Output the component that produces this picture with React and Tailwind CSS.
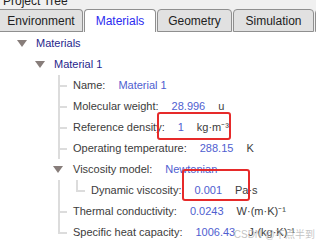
import React from 'react'

const LINE = 'border-[#dcdcdc]'

function Tri() {
  return (
    <svg width="10" height="7" viewBox="0 0 10 7">
      <polygon points="0,0 10,0 5,7" fill="#877d7a" />
    </svg>
  )
}

function Elbow({ last }) {
  return (
    <div className="w-[20px] self-stretch flex flex-col shrink-0">
      <div className={`ml-[5px] w-[9px] flex-1 border-l-2 border-b-2 ${LINE}`} />
      {last ? (
        <div className="flex-1" />
      ) : (
        <div className={`ml-[5px] flex-1 border-l-2 ${LINE}`} />
      )}
    </div>
  )
}

function Pass() {
  return (
    <div className="w-[18px] self-stretch shrink-0">
      <div className={`ml-[5px] h-full border-l-2 ${LINE}`} />
    </div>
  )
}

function Prop({ label, value, unit }) {
  return (
    <div className="flex items-center gap-[13px]">
      <span className="text-[#3c3c3c]">{label}</span>
      <span className="text-[#4f5ed0]">{value}</span>
      {unit && <span className="text-[#3c3c3c]">{unit}</span>}
    </div>
  )
}

const tabs = ['Environment', 'Materials', 'Geometry', 'Simulation']

export default function App() {
  return (
    <div className="relative w-[316px] h-[247px] overflow-hidden bg-[#f0f0f0] font-['Liberation_Sans',Arial,sans-serif]">
      <div className="h-[9px] overflow-hidden">
        <div className="pl-[3px] -mt-[6px] text-[12px] leading-[14px] text-[#222]">Project Tree</div>
      </div>

      <div className="flex items-end h-[23px] gap-px">
        {tabs.map((t) =>
          t === 'Materials' ? (
            <div
              key={t}
              className="h-[23px] w-[72px] shrink-0 flex items-center justify-center bg-white border border-b-0 border-[#8f8f8f] rounded-t-[4px] text-[12px] text-[#2b2bf0]"
            >
              {t}
            </div>
          ) : (
            <div
              key={t}
              className={`h-[23px] shrink-0 flex items-center justify-center bg-[#e1e1e1] border border-[#8f8f8f] rounded-t-[4px] text-[12px] text-[#222] ${
                t === 'Environment' ? 'w-[83px] border-l-0 rounded-tl-none' : t === 'Geometry' ? 'w-[75px]' : 'w-[81px]'
              }`}
            >
              {t}
            </div>
          )
        )}
        <div className="h-[23px] w-[10px] shrink-0 bg-[#e1e1e1] border border-[#8f8f8f] rounded-t-[4px]" />
      </div>

      <div className="bg-white h-[215px] pt-px text-[11px]">
        <div className="flex items-center h-[21px] pl-[17px]">
          <div className="w-[19px] shrink-0 flex"><Tri /></div>
          <span className="text-[#1f1f8c]">Materials</span>
        </div>
        <div className="flex items-center h-[21px] pl-[35px]">
          <div className="w-[19px] shrink-0 flex"><Tri /></div>
          <span className="text-[#1f1f8c]">Material 1</span>
        </div>

        <div className="flex items-center h-[21px] pl-[53px]">
          <Elbow />
          <Prop label="Name:" value="Material 1" />
        </div>
        <div className="flex items-center h-[21px] pl-[53px]">
          <Elbow />
          <Prop label="Molecular weight:" value="28.996" unit="u" />
        </div>
        <div className="flex items-center h-[21px] pl-[53px]">
          <Elbow />
          <Prop label="Reference density:" value="1" unit="kg·m⁻³" />
        </div>
        <div className="flex items-center h-[21px] pl-[53px]">
          <Elbow />
          <Prop label="Operating temperature:" value="288.15" unit="K" />
        </div>
        <div className="flex items-center h-[21px] pl-[53px]">
          <div className="w-[20px] shrink-0 flex"><Tri /></div>
          <Prop label="Viscosity model:" value="Newtonian" />
        </div>
        <div className="flex items-center h-[21px] pl-[53px]">
          <Pass />
          <Elbow last />
          <Prop label="Dynamic viscosity:" value="0.001" unit="Pa·s" />
        </div>
        <div className="flex items-center h-[21px] pl-[53px]">
          <Elbow />
          <Prop label="Thermal conductivity:" value="0.0243" unit="W·(m·K)⁻¹" />
        </div>
        <div className="flex items-center h-[21px] pl-[53px]">
          <Elbow last />
          <Prop label="Specific heat capacity:" value="1006.43" unit="J·(kg·K)⁻¹" />
        </div>
      </div>

      <div className="absolute left-[157px] top-[112px] w-[74px] h-[28px] border-2 border-[#e62a2a] rounded-[3px]" />
      <div className="absolute left-[182px] top-[169px] w-[68px] h-[32px] border-2 border-[#e62a2a] rounded-[3px]" />

      <div className="absolute right-[1px] top-[228px] text-[10px] leading-[13px] text-[#b4b4b4]/80 whitespace-nowrap font-['Liberation_Sans','Noto_Sans_CJK_SC',sans-serif]">
        CSDN @不点半到
      </div>
    </div>
  )
}
